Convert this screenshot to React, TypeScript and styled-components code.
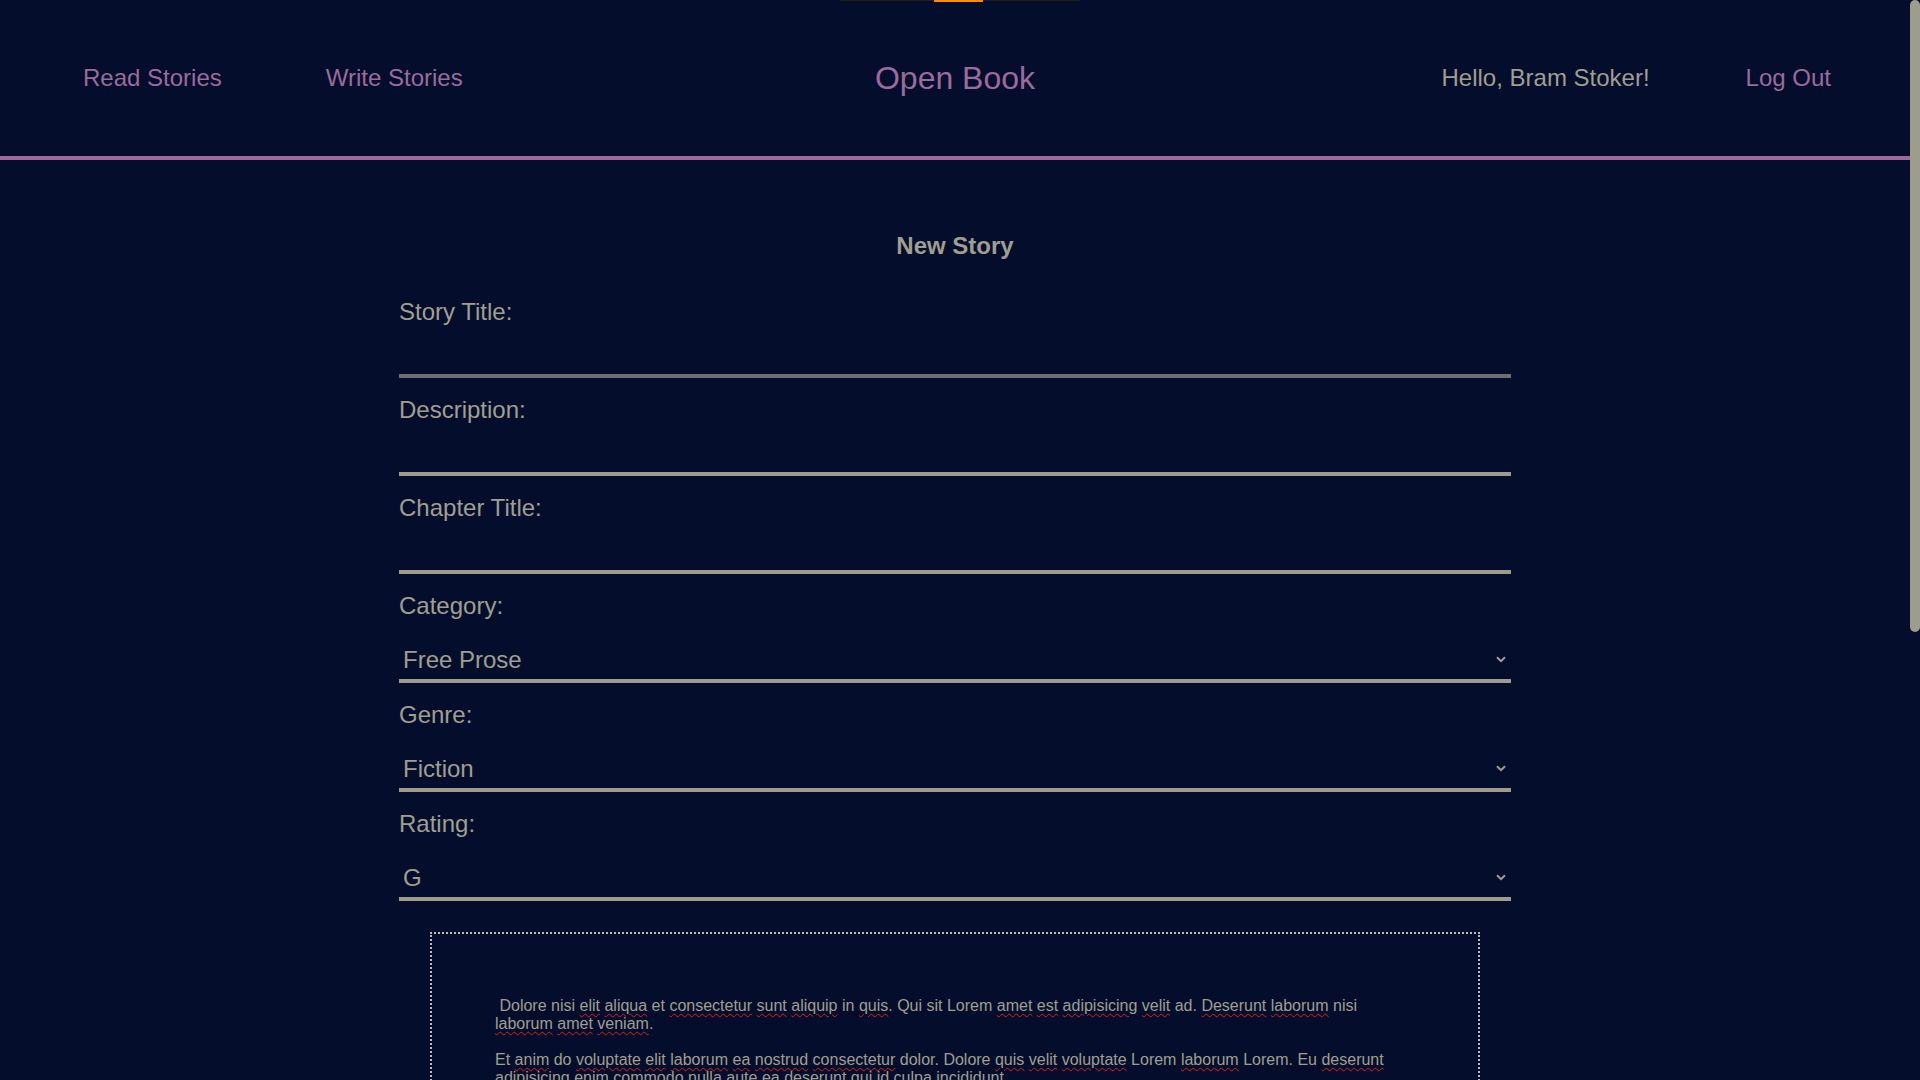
import React from "react";
import styled, { createGlobalStyle } from "styled-components";

const BG = "#040e2c";
const PURPLE = "#9b6b9b";
const GREY = "#a09e90";
const LINE = "#9e9d8d";
const LINE_DARK = "#6e6e6e";

const GlobalStyle = createGlobalStyle`
  html, body {
    margin: 0;
    padding: 0;
    background: ${BG};
  }
  body {
    font-family: "Liberation Sans", Arial, sans-serif;
    color: ${GREY};
    padding-right: 10px;
  }
  ::-webkit-scrollbar {
    width: 0;
    height: 0;
  }
`;

const ScrollRail = styled.div`
  position: fixed;
  top: 0;
  right: 0;
  width: 10px;
  height: 100vh;
  background: ${BG};
  z-index: 20;
`;

const ScrollThumb = styled.div`
  width: 10px;
  height: 632px;
  border-radius: 5px;
  background: ${LINE};
`;

const LoadingTrack = styled.div`
  position: fixed;
  top: 0;
  left: 840px;
  width: 240px;
  height: 1px;
  background: #1e1e1e;
  z-index: 10;
`;

const LoadingFill = styled.div`
  position: absolute;
  top: 0;
  left: 94px;
  width: 49px;
  height: 2px;
  background: #ff8c00;
`;

const Nav = styled.nav`
  display: grid;
  grid-template-columns: 1fr auto 1fr;
  align-items: center;
  height: 156px;
  border-bottom: 4px solid ${PURPLE};
`;

const NavGroup = styled.div<{ $side: "left" | "right" }>`
  display: flex;
  align-items: center;
  justify-content: ${(p) => (p.$side === "left" ? "flex-start" : "flex-end")};
  gap: ${(p) => (p.$side === "left" ? "104px" : "96px")};
  padding: ${(p) => (p.$side === "left" ? "0 0 0 83px" : "0 79px 0 0")};
`;

const NavLink = styled.a`
  font-size: 24px;
  color: ${PURPLE};
  text-decoration: none;
  cursor: pointer;
`;

const Greeting = styled.span`
  font-size: 24px;
  color: ${GREY};
`;

const Brand = styled.a`
  font-size: 32px;
  color: ${PURPLE};
  text-decoration: none;
`;

const Main = styled.main`
  display: flex;
  flex-direction: column;
  align-items: center;
  padding: 72px 0 150px;
`;

const Heading = styled.h2`
  margin: 0 0 38px;
  font-size: 24px;
  font-weight: bold;
  color: ${GREY};
  line-height: normal;
`;

const Form = styled.form`
  width: 1112px;
  display: flex;
  flex-direction: column;
`;

const Field = styled.div`
  display: flex;
  flex-direction: column;
  margin-bottom: 18px;
`;

const Label = styled.label`
  font-size: 24px;
  line-height: normal;
  color: ${GREY};
`;

const TextInput = styled.input<{ $dim?: boolean }>`
  box-sizing: border-box;
  height: 52px;
  width: 100%;
  border: none;
  border-bottom: 4px solid ${(p) => (p.$dim ? LINE_DARK : LINE)};
  background: transparent;
  color: ${GREY};
  font-family: inherit;
  font-size: 24px;
  outline: none;
  padding: 0 4px;
`;

const SelectWrap = styled.div`
  position: relative;
  margin-top: 10px;
`;

const Select = styled.select`
  box-sizing: border-box;
  appearance: none;
  -webkit-appearance: none;
  width: 100%;
  height: 53px;
  border: none;
  border-radius: 0;
  border-bottom: 4px solid ${LINE};
  background: transparent;
  color: ${GREY};
  font-family: "Liberation Sans", Arial, sans-serif;
  font-size: 24px;
  padding: 10px 0 0 4px;
  outline: none;

  option {
    background: ${BG};
    color: ${GREY};
  }
`;

const Chevron = styled.svg`
  position: absolute;
  right: 5px;
  top: 26px;
  width: 10px;
  height: 7px;
  pointer-events: none;
`;

const Editor = styled.div`
  box-sizing: border-box;
  align-self: center;
  width: 1050px;
  min-height: 760px;
  margin-top: 13px;
  border: 2px dotted #bdbcb0;
  padding: 63px 63px 47px;
  font-size: 16px;
  line-height: normal;
  color: ${GREY};
`;

const Para = styled.p`
  margin: 0 0 1.15em;
`;

const Misspelt = styled.span`
  text-decoration: underline wavy #e01b1b;
  text-decoration-thickness: 1px;
  text-underline-offset: 2px;
`;

const FLAGGED = new Set([
  "elit", "aliqua", "consectetur", "sunt", "aliquip", "quis", "amet", "est",
  "adipisicing", "velit", "Deserunt", "laborum", "veniam", "anim", "voluptate",
  "ea", "nostrud", "deserunt", "enim", "commodo", "nulla", "aute", "qui",
  "culpa", "incididunt", "officia", "pariatur", "irure", "cupidatat", "magna",
  "eiusmod", "tempor", "ullamco", "exercitation", "reprehenderit", "mollit",
  "excepteur", "occaecat", "proident", "fugiat", "labore", "esse",
  "Duis", "minim", "Excepteur", "Officia",
]);

function SpellText({ text }: { text: string }) {
  const parts = text.split(/(\s+)/);
  return (
    <>
      {parts.map((part, i) => {
        const m = part.match(/^([A-Za-z]+)([^A-Za-z]*)$/);
        if (m && FLAGGED.has(m[1])) {
          return (
            <React.Fragment key={i}>
              <Misspelt>{m[1]}</Misspelt>
              {m[2]}
            </React.Fragment>
          );
        }
        return <React.Fragment key={i}>{part}</React.Fragment>;
      })}
    </>
  );
}

const paragraphs = [
  "\u00a0Dolore nisi elit aliqua et consectetur sunt aliquip in quis. Qui sit Lorem amet est adipisicing velit ad. Deserunt laborum nisi laborum amet veniam.",
  "Et anim do voluptate elit laborum ea nostrud consectetur dolor. Dolore quis velit voluptate Lorem laborum Lorem. Eu deserunt adipisicing enim commodo nulla aute ea deserunt qui id culpa incididunt.",
  "Officia pariatur irure cupidatat magna eiusmod tempor ullamco exercitation. Lorem reprehenderit mollit do sunt excepteur occaecat proident fugiat labore esse. Duis aute irure dolor in reprehenderit in voluptate velit esse.",
  "Excepteur sint occaecat cupidatat non proident, sunt in culpa qui officia deserunt mollit anim id est laborum. Ut enim ad minim veniam, quis nostrud exercitation ullamco laboris nisi ut aliquip ex ea commodo.",
];

function ChevronIcon() {
  return (
    <Chevron viewBox="0 0 10 7" aria-hidden="true">
      <path d="M1 1.2 L5 5.2 L9 1.2" fill="none" stroke={GREY} strokeWidth="2" />
    </Chevron>
  );
}

function SelectField({ label, options }: { label: string; options: string[] }) {
  return (
    <Field>
      <Label>{label}</Label>
      <SelectWrap>
        <Select defaultValue={options[0]}>
          {options.map((o) => (
            <option key={o} value={o}>
              {o}
            </option>
          ))}
        </Select>
        <ChevronIcon />
      </SelectWrap>
    </Field>
  );
}

export default function App() {
  return (
    <>
      <GlobalStyle />
      <LoadingTrack>
        <LoadingFill />
      </LoadingTrack>
      <ScrollRail>
        <ScrollThumb />
      </ScrollRail>
      <Nav>
        <NavGroup $side="left">
          <NavLink>Read Stories</NavLink>
          <NavLink>Write Stories</NavLink>
        </NavGroup>
        <Brand>Open Book</Brand>
        <NavGroup $side="right">
          <Greeting>Hello, Bram Stoker!</Greeting>
          <NavLink>Log Out</NavLink>
        </NavGroup>
      </Nav>
      <Main>
        <Heading>New Story</Heading>
        <Form onSubmit={(e) => e.preventDefault()}>
          <Field>
            <Label>Story Title:</Label>
            <TextInput $dim type="text" />
          </Field>
          <Field>
            <Label>Description:</Label>
            <TextInput type="text" />
          </Field>
          <Field>
            <Label>Chapter Title:</Label>
            <TextInput type="text" />
          </Field>
          <SelectField label="Category:" options={["Free Prose", "Poetry", "Short Story"]} />
          <SelectField label="Genre:" options={["Fiction", "Non-Fiction", "Horror", "Fantasy"]} />
          <SelectField label="Rating:" options={["G", "PG", "PG-13", "R"]} />
          <Editor>
            {paragraphs.map((p, i) => (
              <Para key={i}>
                <SpellText text={p} />
              </Para>
            ))}
          </Editor>
        </Form>
      </Main>
    </>
  );
}
